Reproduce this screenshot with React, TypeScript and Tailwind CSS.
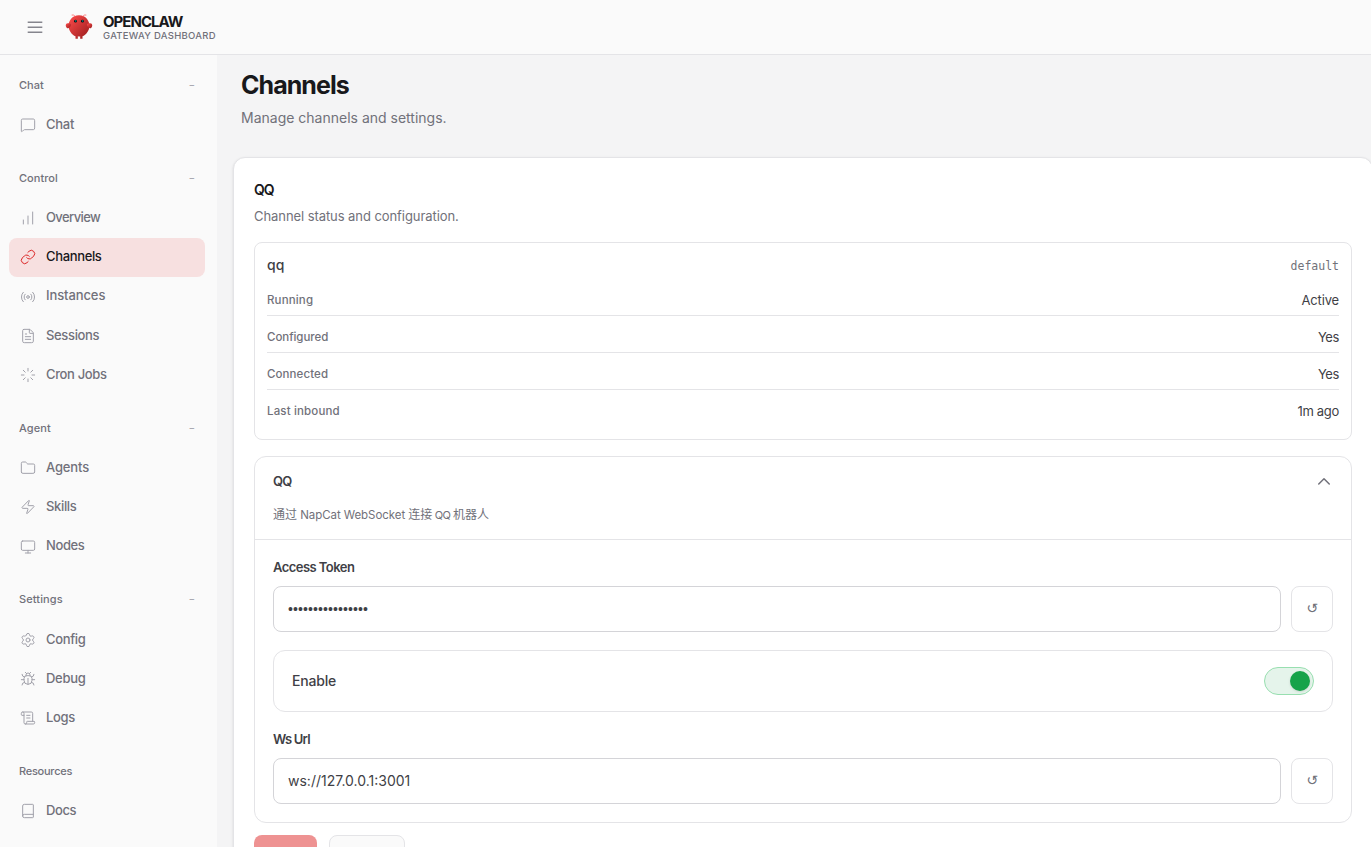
import type { ReactNode } from 'react';
import {
  BarChart,
  Book,
  Bug,
  FileText,
  Folder,
  Link,
  Loader,
  MessageSquare,
  Monitor,
  Radio,
  ScrollText,
  Settings,
  Zap,
  type LucideIcon,
} from 'lucide-react';

interface NavItem {
  label: string;
  icon: LucideIcon;
  tracking: string;
  active?: boolean;
}

interface NavGroup {
  title: string;
  tracking: string;
  external?: boolean;
  items: NavItem[];
}

const groups: NavGroup[] = [
  {
    title: 'Chat',
    tracking: 'tracking-normal',
    items: [{ label: 'Chat', icon: MessageSquare, tracking: 'tracking-[-0.25px]' }],
  },
  {
    title: 'Control',
    tracking: 'tracking-[0.05px]',
    items: [
      { label: 'Overview', icon: BarChart, tracking: 'tracking-[-0.6px]' },
      { label: 'Channels', icon: Link, tracking: 'tracking-[-0.35px]', active: true },
      { label: 'Instances', icon: Radio, tracking: 'tracking-[-0.1px]' },
      { label: 'Sessions', icon: FileText, tracking: 'tracking-[-0.35px]' },
      { label: 'Cron Jobs', icon: Loader, tracking: 'tracking-[-0.35px]' },
    ],
  },
  {
    title: 'Agent',
    tracking: 'tracking-[0.1px]',
    items: [
      { label: 'Agents', icon: Folder, tracking: 'tracking-[-0.15px]' },
      { label: 'Skills', icon: Zap, tracking: 'tracking-[-0.35px]' },
      { label: 'Nodes', icon: Monitor, tracking: 'tracking-[-0.4px]' },
    ],
  },
  {
    title: 'Settings',
    tracking: 'tracking-[0.1px]',
    items: [
      { label: 'Config', icon: Settings, tracking: 'tracking-[-0.35px]' },
      { label: 'Debug', icon: Bug, tracking: 'tracking-[-0.3px]' },
      { label: 'Logs', icon: ScrollText, tracking: 'tracking-[-0.3px]' },
    ],
  },
  {
    title: 'Resources',
    tracking: 'tracking-[-0.25px]',
    external: true,
    items: [{ label: 'Docs', icon: Book, tracking: 'tracking-[-0.4px]' }],
  },
];

const statusRows = [
  { label: 'Running', value: 'Active', labelTracking: 'tracking-[0.15px]', valueTracking: 'tracking-[-0.15px]' },
  { label: 'Configured', value: 'Yes', labelTracking: 'tracking-[-0.05px]', valueTracking: 'tracking-[-0.4px]' },
  { label: 'Connected', value: 'Yes', labelTracking: 'tracking-[0.1px]', valueTracking: 'tracking-[-0.4px]' },
  { label: 'Last inbound', value: '1m ago', labelTracking: 'tracking-[0.15px]', valueTracking: 'tracking-[-0.3px]' },
];

function Logo() {
  return (
    <svg width="28" height="28" viewBox="0 0 120 120" fill="none">
      <defs>
        <linearGradient id="claw" x1="0%" y1="0%" x2="100%" y2="100%">
          <stop offset="0%" stopColor="#ff4d4d" />
          <stop offset="100%" stopColor="#991b1b" />
        </linearGradient>
      </defs>
      <path
        d="M60 10C30 10 15 35 15 55C15 75 30 95 45 100V110H55V100C55 100 60 102 65 100V110H75V100C90 95 105 75 105 55C105 35 90 10 60 10Z"
        fill="url(#claw)"
      />
      <path d="M20 45C5 40 0 50 5 60C10 70 20 65 25 55C28 48 25 45 20 45Z" fill="url(#claw)" />
      <path d="M100 45C115 40 120 50 115 60C110 70 100 65 95 55C92 48 95 45 100 45Z" fill="url(#claw)" />
      <path d="M45 15Q35 5 30 8" stroke="#ff4d4d" strokeWidth="3" strokeLinecap="round" />
      <path d="M75 15Q85 5 90 8" stroke="#ff4d4d" strokeWidth="3" strokeLinecap="round" />
      <circle cx="45" cy="35" r="6" fill="#050810" />
      <circle cx="75" cy="35" r="6" fill="#050810" />
      <circle cx="46" cy="34" r="2.5" fill="#00e5cc" />
      <circle cx="76" cy="34" r="2.5" fill="#00e5cc" />
    </svg>
  );
}

function Header() {
  return (
    <header className="flex h-[55px] shrink-0 items-center border-b border-[#e4e4e7] bg-[#fafafa] pl-[26px]">
      <svg width="18" height="18" viewBox="0 0 18 18" stroke="#85858d" strokeWidth="1.5">
        <path d="M1.7 4.2h14.6M1.7 9.2h14.6M1.7 14.2h14.6" />
      </svg>
      <div className="ml-[21px] flex items-center gap-[10px]">
        <Logo />
        <div className="flex flex-col pt-px">
          <span className="text-[15px] leading-[17px] font-bold tracking-[-0.98px] text-[#18181b]">OPENCLAW</span>
          <span className="text-[9.5px] leading-[12px] font-medium tracking-[0.28px] text-[#71717a]">
            GATEWAY DASHBOARD
          </span>
        </div>
      </div>
    </header>
  );
}

function Sidebar() {
  return (
    <aside className="flex w-[217px] shrink-0 flex-col gap-[19px] bg-[#fafafa] pt-[15px] pr-3 pl-[9px]">
      {groups.map((group) => (
        <div key={group.title} className="flex flex-col">
          <div className="flex h-[30px] items-center justify-between px-[10px] text-[11px] font-medium text-[#71717a]">
            <span className={group.tracking}>{group.title}</span>
            {!group.external && <span className="pb-0.5 text-[10px] font-normal text-[#a1a1aa]">−</span>}
          </div>
          <nav className="mt-[6px] flex flex-col gap-px">
            {group.items.map(({ label, icon: Icon, tracking, active }) => (
              <a
                key={label}
                className={
                  active
                    ? 'flex h-[38.2px] items-center gap-[10px] rounded-lg bg-[#f7e0e0] px-[11px] text-[13px] font-medium text-[#18181b]'
                    : 'flex h-[38.2px] items-center gap-[10px] rounded-lg px-[11px] text-[13px] font-medium text-[#71717a]'
                }
              >
                <Icon size={16} strokeWidth={1.5} className={active ? 'text-[#dc2626]' : 'text-[#a1a1aa]'} />
                <span className={`pb-px ${tracking}`}>{label}</span>
              </a>
            ))}
          </nav>
        </div>
      ))}
    </aside>
  );
}

function StatusCard() {
  return (
    <div className="mt-4 h-[198px] rounded-lg border border-[#e4e4e7] px-3 pt-3">
      <div className="flex h-[22px] items-center justify-between">
        <span className="pb-[3px] text-[14px] font-medium text-[#3f3f46]">qq</span>
        <span className="pt-px font-['DejaVu_Sans_Mono',monospace] text-[11.5px] text-[#71717a]">default</span>
      </div>
      <div className="mt-[2px]">
        {statusRows.map((row, i) => (
          <div
            key={row.label}
            className={
              i < statusRows.length - 1
                ? 'flex h-[37px] items-center justify-between border-b border-[#e4e4e7] pt-[7px]'
                : 'flex h-[37px] items-center justify-between pt-1.5'
            }
          >
            <span className={`pt-px text-[11.5px] font-medium text-[#71717a] ${row.labelTracking}`}>{row.label}</span>
            <span className={`text-[13px] text-[#3f3f46] ${row.valueTracking}`}>{row.value}</span>
          </div>
        ))}
      </div>
    </div>
  );
}

function Field({ label, tracking, children }: { label: string; tracking: string; children: ReactNode }) {
  return (
    <div className="flex flex-col gap-[9px]">
      <label className={`text-[13px] leading-[19px] font-semibold text-[#3f3f46] ${tracking}`}>{label}</label>
      <div className="flex gap-[10px]">
        <div className="flex h-[46px] flex-1 items-center rounded-lg border border-[#d4d4d8] px-[14px] pb-0.5 text-[14px] text-[#3f3f46]">
          {children}
        </div>
        <button className="flex h-[46px] w-[42px] items-center justify-center rounded-lg border border-[#e4e4e7] pb-0.5 font-['DejaVu_Sans',sans-serif] text-[14px] text-[#71717a]">
          ↺
        </button>
      </div>
    </div>
  );
}

function ConfigCard() {
  return (
    <div className="mt-4 rounded-xl border border-[#e4e4e7]">
      <div className="flex h-[83px] justify-between border-b border-[#e4e4e7] px-[18px] pt-[15px]">
        <div>
          <h3 className="text-[13px] leading-[19px] font-semibold tracking-[-0.7px] text-[#3f3f46]">QQ</h3>
          <p className="mt-[15px] text-[12px] leading-[18px] text-[#71717a]">
            通过<span className="text-[11.5px] tracking-[-0.06px]"> NapCat WebSocket </span>连接
            <span className="text-[11px] tracking-[-0.6px]"> QQ </span>机器人
          </p>
        </div>
        <svg
          width="18"
          height="18"
          viewBox="0 0 24 24"
          fill="none"
          stroke="#71717a"
          strokeWidth="2"
          strokeLinecap="round"
          strokeLinejoin="round"
        >
          <path d="m5 16 7-7 7 7" />
        </svg>
      </div>
      <div className="flex flex-col gap-[18px] p-[18px]">
        <Field label="Access Token" tracking="tracking-[-0.55px]">
          <span className="pt-0.5 font-['Liberation_Sans',sans-serif] tracking-[0.1px]">••••••••••••••••</span>
        </Field>
        <div className="flex h-[62px] items-center justify-between rounded-xl border border-[#e4e4e7] px-[18px]">
          <span className="pb-0.5 text-[14px] font-medium tracking-[-0.2px] text-[#3f3f46]">Enable</span>
          <button className="flex h-7 w-[50px] items-center justify-end rounded-full border border-[#98dfb0] bg-[#e5f4eb] pr-[3px]">
            <span className="h-5 w-5 rounded-full bg-[#16a34a] shadow-sm" />
          </button>
        </div>
        <Field label="Ws Url" tracking="tracking-[-0.8px]">
          <span>ws://127.0.0.1:3001</span>
        </Field>
      </div>
    </div>
  );
}

export default function App() {
  return (
    <div className="flex h-[847px] w-[1371px] flex-col overflow-hidden bg-[#f4f4f5] font-[Inter,'Noto_Sans_CJK_SC',sans-serif]">
      <Header />
      <div className="flex min-h-0 flex-1">
        <Sidebar />
        <main className="w-[1154px] shrink-0 pl-4">
          <div className="h-[102px] pt-[14px] pl-2">
            <h1 className="text-[25px] leading-[33px] font-bold tracking-[-0.95px] text-[#18181b]">Channels</h1>
            <p className="mt-[5px] text-[14px] leading-[21px] text-[#71717a]">Manage channels and settings.</p>
          </div>
          <section className="h-[760px] w-[1140px] rounded-xl border border-[#e4e4e7] bg-white px-5 pt-5 shadow-sm">
            <h2 className="text-[14px] leading-[24px] font-semibold tracking-[-1px] text-[#18181b]">QQ</h2>
            <p className="mt-1 text-[13px] leading-[20px] tracking-[-0.07px] text-[#71717a]">
              Channel status and configuration.
            </p>
            <StatusCard />
            <ConfigCard />
            <div className="mt-3 flex gap-3">
              <button className="h-9 w-[63px] rounded-lg bg-[#ee9292]" />
              <button className="h-9 w-[76px] rounded-lg border border-[#e4e4e7] bg-[#fafafa]" />
            </div>
          </section>
        </main>
      </div>
    </div>
  );
}
